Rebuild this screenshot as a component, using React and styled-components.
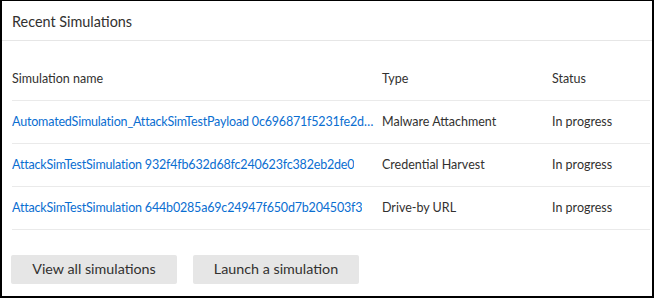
import React from 'react'
import styled, { createGlobalStyle } from 'styled-components'

const GlobalStyle = createGlobalStyle`
  html, body {
    margin: 0;
    padding: 0;
    background: #ffffff;
  }
  body {
    font-family: "Segoe UI", Lato, "Noto Sans", sans-serif;
    color: #323130;
  }
`

const Frame = styled.div`
  box-sizing: border-box;
  width: 654px;
  height: 298px;
  border-style: solid;
  border-color: #000;
  border-width: 1px 2px 2px 2px;
  background: #fff;
  display: flex;
  flex-direction: column;
  overflow: hidden;
`

const Header = styled.div`
  box-sizing: border-box;
  height: 40px;
  display: flex;
  align-items: center;
  padding: 1px 10px 0;
  border-bottom: 1px solid #e6e6e6;
`

const Title = styled.h2`
  margin: 0;
  font-size: 14.4px;
  font-weight: 400;
  color: #323130;
`

const Body = styled.div`
  padding: 0 2px 0 10px;
  display: flex;
  flex-direction: column;
`

const Table = styled.div`
  display: grid;
  grid-template-columns: 370px 170px 1fr;
`

const HeadCell = styled.div`
  box-sizing: border-box;
  height: 60px;
  padding-top: 29px;
  font-size: 12.5px;
  color: #323130;
  border-bottom: 1px solid #eaeaea;
  line-height: 18px;
`

const Cell = styled.div`
  box-sizing: border-box;
  height: 43px;
  display: flex;
  align-items: center;
  padding-bottom: 2px;
  font-size: 12.5px;
  color: ${p => (p.$link ? '#0a6ed1' : '#323130')};
  letter-spacing: ${p => (p.$link ? '-0.18px' : '0')};
  border-bottom: 1px solid #eaeaea;
  white-space: nowrap;
  overflow: hidden;
  padding-right: ${p => (p.$link ? '8px' : '0')};
`

const Ellipsis = styled.span`
  min-width: 0;
  overflow: hidden;
  text-overflow: ellipsis;
  white-space: nowrap;
  cursor: pointer;
`

const Actions = styled.div`
  display: flex;
  gap: 16px;
  margin-top: 25px;
  margin-left: -1px;
`

const ActionButton = styled.button`
  box-sizing: border-box;
  width: 166px;
  height: 29px;
  border: none;
  border-radius: 2px;
  background: #e6e6e6;
  color: #323130;
  font-family: inherit;
  font-size: 14.3px;
  padding: 0 0 2px;
  cursor: pointer;
`

const simulations = [
  {
    name: 'AutomatedSimulation_AttackSimTestPayload 0c696871f5231fe2d4b7e1f0',
    type: 'Malware Attachment',
    status: 'In progress',
  },
  {
    name: 'AttackSimTestSimulation 932f4fb632d68fc240623fc382eb2de0',
    type: 'Credential Harvest',
    status: 'In progress',
  },
  {
    name: 'AttackSimTestSimulation 644b0285a69c24947f650d7b204503f3',
    type: 'Drive-by URL',
    status: 'In progress',
  },
]

const App = () => {
  return (
    <>
      <GlobalStyle />
      <Frame>
        <Header>
          <Title>Recent Simulations</Title>
        </Header>
        <Body>
          <Table>
            <HeadCell>Simulation name</HeadCell>
            <HeadCell>Type</HeadCell>
            <HeadCell>Status</HeadCell>
            {simulations.map(sim => (
              <React.Fragment key={sim.name}>
                <Cell $link>
                  <Ellipsis>{sim.name}</Ellipsis>
                </Cell>
                <Cell>{sim.type}</Cell>
                <Cell>{sim.status}</Cell>
              </React.Fragment>
            ))}
          </Table>
          <Actions>
            <ActionButton>View all simulations</ActionButton>
            <ActionButton>Launch a simulation</ActionButton>
          </Actions>
        </Body>
      </Frame>
    </>
  )
}

export default App
